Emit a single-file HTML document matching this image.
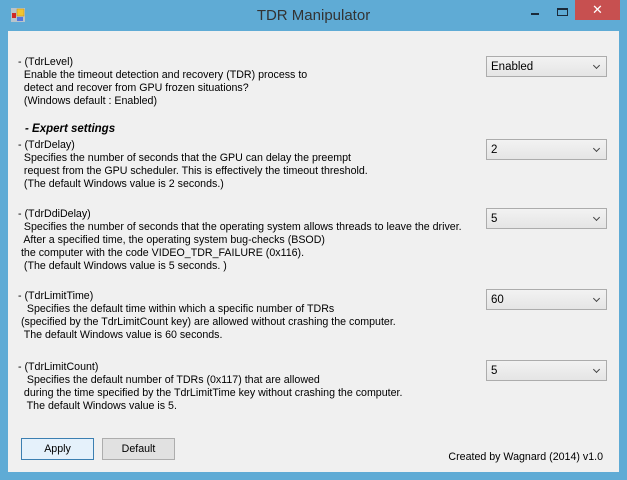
<!DOCTYPE html>
<html><head><meta charset="utf-8"><style>
*{margin:0;padding:0;box-sizing:border-box}
body{width:627px;height:480px;background:#5fabd5;font-family:"Liberation Sans",Arial,sans-serif;font-size:10.65px;color:#000;position:relative;overflow:hidden}
.title{position:absolute;left:0;top:0;width:627px;height:31px;text-align:center;line-height:31px;font-size:15px;color:#333}
.close{position:absolute;left:575px;top:0;width:45px;height:20px;background:#c75050;color:#fff;text-align:center;line-height:20px;font-size:13px}
.client{position:absolute;left:8px;top:31px;width:611px;height:441px;background:#f0f0f0}
.t{position:absolute;white-space:pre;line-height:13px}
.cb{position:absolute;left:478px;width:121px;height:21px;border:1px solid #acacac;background:linear-gradient(#f2f2f2,#e5e5e5);padding-left:4px;line-height:20px;font-size:11.5px}
.cb:after{content:"";position:absolute;right:7px;top:6px;width:4px;height:4px;border-right:1.5px solid #444;border-bottom:1.5px solid #444;transform:rotate(45deg)}
.btn{position:absolute;top:407px;width:73px;height:22px;border:1px solid #adadad;background:#e1e1e1;text-align:center;line-height:20px}
</style></head><body>
<svg style="position:absolute;left:11px;top:8px" width="15" height="15"><rect x="0" y="0" width="14" height="14" fill="#b8c4cc"/><rect x="6" y="1" width="7" height="7" fill="#f2c530" stroke="#c8961a" stroke-width="0.6"/><rect x="1" y="5" width="4" height="5" fill="#d02828"/><rect x="6" y="9" width="6" height="4" fill="#5577dd"/></svg>
<div class="title">TDR Manipulator</div>
<div style="position:absolute;left:531px;top:13px;width:8px;height:2px;background:#1a2a3a"></div>
<div style="position:absolute;left:557px;top:8px;width:11px;height:8px;border:1px solid #1a2a3a;border-top-width:2px"></div>
<div class="close">✕</div>
<div class="client">
<div class="t" style="left:10px;top:25px">- (TdrLevel)
  Enable the timeout detection and recovery (TDR) process to
  detect and recover from GPU frozen situations?
  (Windows default : Enabled)</div>
<div class="t" style="left:17px;top:92px;font-weight:bold;font-style:italic;font-size:11.5px">- Expert settings</div>
<div class="t" style="left:10px;top:108px">- (TdrDelay)
  Specifies the number of seconds that the GPU can delay the preempt
  request from the GPU scheduler. This is effectively the timeout threshold.
  (The default Windows value is 2 seconds.)</div>
<div class="t" style="left:10px;top:177px">- (TdrDdiDelay)
  Specifies the number of seconds that the operating system allows threads to leave the driver.
  After a specified time, the operating system bug-checks (BSOD)
 the computer with the code VIDEO_TDR_FAILURE (0x116).
  (The default Windows value is 5 seconds. )</div>
<div class="t" style="left:10px;top:259px">- (TdrLimitTime)
   Specifies the default time within which a specific number of TDRs
 (specified by the TdrLimitCount key) are allowed without crashing the computer.
  The default Windows value is 60 seconds.</div>
<div class="t" style="left:10px;top:330px">- (TdrLimitCount)
   Specifies the default number of TDRs (0x117) that are allowed
  during the time specified by the TdrLimitTime key without crashing the computer.
   The default Windows value is 5.</div>
<div class="cb" style="top:25px">Enabled</div>
<div class="cb" style="top:108px">2</div>
<div class="cb" style="top:177px">5</div>
<div class="cb" style="top:258px">60</div>
<div class="cb" style="top:329px">5</div>
<div class="btn" style="left:13px;border-color:#3c7fb1;background:#e5f1fb">Apply</div>
<div class="btn" style="left:94px">Default</div>
<div class="t" style="right:16px;top:420px">Created by Wagnard (2014) v1.0</div>
</div>
</body></html>
